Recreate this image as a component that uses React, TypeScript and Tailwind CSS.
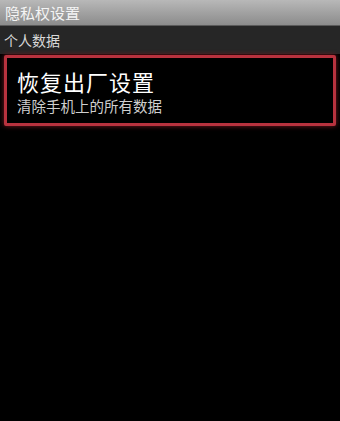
import React from 'react';

const font = { fontFamily: '"Noto Sans CJK SC", "Noto Sans", sans-serif' };

export default function App() {
  return (
    <div className="w-[340px] h-[421px] bg-black overflow-hidden" style={font}>
      <div className="h-[26px] bg-gradient-to-b from-[#b8b8b8] to-[#8c8c8c] border-b border-[#5a5a5a] flex items-center px-[5px]">
        <span className="text-[15px] leading-none text-[#f4f4f4]">隐私权设置</span>
      </div>
      <div className="h-[28px] bg-[#262626] flex items-center px-[4px]">
        <span className="text-[14px] leading-none text-[#d8d8d8]">个人数据</span>
      </div>
      <div className="mx-[4px] mt-px h-[71px] border-[3px] border-[#b8323e] rounded-[2px] shadow-[0_0_5px_#7a1a22] bg-black flex flex-col justify-center pl-[10px]">
        <div className="text-[22px] leading-[28px] text-white tracking-[1px]">恢复出厂设置</div>
        <div className="text-[14.5px] leading-[18px] text-[#cfcfcf] mt-[2px]">清除手机上的所有数据</div>
      </div>
    </div>
  );
}
